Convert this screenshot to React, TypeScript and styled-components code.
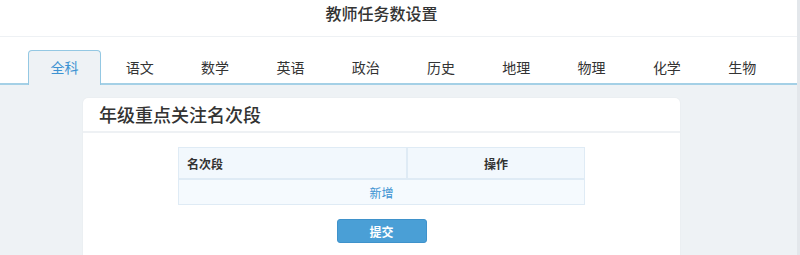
import React from "react";
import styled, { createGlobalStyle } from "styled-components";

const Global = createGlobalStyle`
  html, body { margin: 0; padding: 0; background: #eef2f5; }
  body {
    font-family: "Noto Sans CJK SC", "Noto Sans", sans-serif;
    color: #333;
    -webkit-font-smoothing: antialiased;
  }
  * { box-sizing: border-box; }
`;

const Page = styled.div`
  width: 800px;
  min-height: 255px;
  display: flex;
  flex-direction: column;
  background: #eef2f5;
  border-right: 3px solid #e3e7eb;
`;

const TitleBar = styled.header`
  height: 37px;
  background: #fff;
  border-bottom: 1px solid #eef1f4;
  display: flex;
  align-items: center;
  justify-content: center;
  padding: 0 34px 11px 0;
  font-size: 16px;
  font-weight: 500;
  color: #333;
`;

const TabStrip = styled.nav`
  background: #fff;
  padding: 13px 0 0 28px;
  display: flex;
  border-bottom: 2px solid #a4d0e6;
`;

const Tab = styled.div<{ $active?: boolean }>`
  width: 73px;
  height: 35px;
  margin-right: 2.3px;
  margin-bottom: -2px;
  display: flex;
  align-items: center;
  justify-content: center;
  font-size: 14px;
  padding-bottom: 2px;
  color: ${(p) => (p.$active ? "#3d93d2" : "#333")};
  background: ${(p) => (p.$active ? "#eef2f5" : "transparent")};
  border: 1px solid ${(p) => (p.$active ? "#94c8e3" : "transparent")};
  border-bottom: none;
  border-radius: 4px 4px 0 0;
`;

const Content = styled.main`
  padding: 13px 0 0 83px;
  flex: 1;
`;

const Card = styled.section`
  width: 597px;
  background: #fff;
  border-radius: 5px 5px 0 0;
  box-shadow: 0 0 2px rgba(0, 0, 0, 0.06);
  min-height: 160px;
`;

const CardHeader = styled.div`
  height: 35px;
  display: flex;
  align-items: center;
  padding: 0 0 2px 16px;
  font-size: 18px;
  font-weight: 500;
  color: #333;
  border-bottom: 2px solid #eef1f4;
`;

const CardBody = styled.div`
  padding-top: 14px;
  display: flex;
  flex-direction: column;
  align-items: center;
`;

const Table = styled.div`
  width: 407px;
  border: 1px solid #dfebf5;
  display: flex;
  flex-direction: column;
`;

const HeadRow = styled.div`
  display: grid;
  grid-template-columns: 227px 1fr;
  height: 32px;
  background: #f2f8fd;
  border-bottom: 2px solid #dfebf5;
`;

const HeadCell = styled.div<{ $center?: boolean }>`
  display: flex;
  align-items: center;
  justify-content: ${(p) => (p.$center ? "center" : "flex-start")};
  padding-left: ${(p) => (p.$center ? "0" : "8px")};
  font-size: 12px;
  font-weight: 600;
  color: #333;
  & + & {
    border-left: 2px solid #dfebf5;
  }
`;

const BodyRow = styled.div`
  height: 24px;
  background: #f5fafe;
  display: flex;
  align-items: center;
  justify-content: center;
  font-size: 12px;
  color: #3d93d2;
`;

const SubmitButton = styled.button`
  margin-top: 14px;
  width: 90px;
  height: 24px;
  background: #4a9fd6;
  border: 1px solid #3f92cb;
  border-radius: 3px;
  color: #fff;
  font-family: inherit;
  font-size: 12px;
  font-weight: 600;
  padding: 0;
  cursor: pointer;
`;

const subjects = ["全科", "语文", "数学", "英语", "政治", "历史", "地理", "物理", "化学", "生物"];

export default function App() {
  return (
    <>
      <Global />
      <Page>
        <TitleBar>教师任务数设置</TitleBar>
        <TabStrip>
          {subjects.map((s, i) => (
            <Tab key={s} $active={i === 0}>
              {s}
            </Tab>
          ))}
        </TabStrip>
        <Content>
          <Card>
            <CardHeader>年级重点关注名次段</CardHeader>
            <CardBody>
              <Table>
                <HeadRow>
                  <HeadCell>名次段</HeadCell>
                  <HeadCell $center>操作</HeadCell>
                </HeadRow>
                <BodyRow>新增</BodyRow>
              </Table>
              <SubmitButton>提交</SubmitButton>
            </CardBody>
          </Card>
        </Content>
      </Page>
    </>
  );
}
